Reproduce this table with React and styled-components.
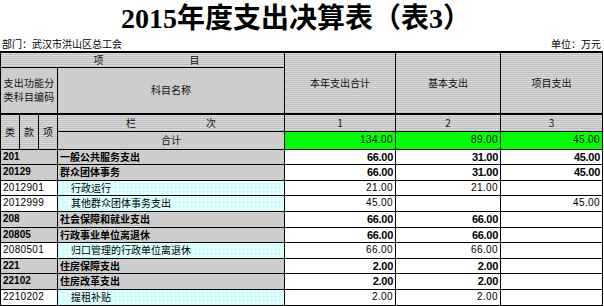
import React from "react";
import styled, { createGlobalStyle } from "styled-components";

const GlobalStyle = createGlobalStyle`
  html, body {
    margin: 0;
    padding: 0;
    background: #fff;
  }
  body {
    width: 604px;
    height: 306px;
    overflow: hidden;
    font-family: "Liberation Sans", "Noto Sans CJK SC", sans-serif;
    color: #000;
  }
`;

const grey = `
  background-color: #c0c0c0;
  background-image: conic-gradient(#f4f4f4 0 25%, transparent 0);
  background-size: 2px 2px;
`;

const cyan = `
  background-color: #ccffff;
  background-image: conic-gradient(#ffffff 0 25%, transparent 0);
  background-size: 4px 4px;
`;

const Page = styled.div`
  width: 604px;
`;

const Title = styled.h1`
  margin: 0;
  height: 38px;
  padding-right: 12px;
  font-family: "Liberation Serif", "Noto Sans CJK SC", serif;
  font-size: 28px;
  font-weight: bold;
  line-height: 38px;
  text-align: center;
`;

const InfoBar = styled.div`
  display: flex;
  justify-content: space-between;
  height: 13px;
  padding: 0 3px 0 2px;
  font-family: "Noto Sans CJK SC", sans-serif;
  font-size: 10px;
  line-height: 11px;
`;

const Table = styled.table`
  width: 602px;
  border-collapse: collapse;
  table-layout: fixed;
  border-top: 2px solid #000;
`;

const Row = styled.tr`
  height: ${p => p.h}px;
`;

const Cell = styled.td`
  border: 1px solid #000;
  padding: 0 2px;
  font-family: "Noto Sans CJK SC", sans-serif;
  font-size: 10px;
  line-height: 10px;
  white-space: nowrap;
  overflow: hidden;
  text-align: ${p => p.align || "left"};
  font-weight: ${p => (p.bold ? "bold" : "normal")};
  ${p => p.tone === "grey" && grey}
  ${p => p.tone === "cyan" && cyan}
  ${p => p.tone === "green" && "background: #00ff00;"}
  ${p => p.thickBottom && "border-bottom: 2px solid #000;"}
`;

const Head = styled(Cell)`
  text-align: center;
  color: #111;
`;

const Spread = styled.div`
  display: flex;
  justify-content: center;
  gap: ${p => p.gap}px;
  padding-left: ${p => p.shift || 0}px;
`;

const Lines = styled.div`
  display: flex;
  flex-direction: column;
  align-items: center;
  letter-spacing: 0.2px;
  line-height: 14px;
`;

const Code = styled(Cell)`
  font-family: "Liberation Sans", sans-serif;
  font-size: 10px;
  letter-spacing: ${p => (p.bold ? 0 : 0.3)}px;
  padding-left: 2px;
`;

const Name = styled(Cell)`
  padding-left: ${p => (p.bold ? 2 : 13)}px;
  font-size: 10px;
`;

const Num = styled(Cell)`
  font-family: "Liberation Sans", sans-serif;
  font-size: ${p => (p.bold ? 11 : 10)}px;
  letter-spacing: ${p => (p.bold ? -0.3 : 0.4)}px;
  text-align: right;
  padding-right: 2px;
  color: #000;
`;

const rows = [
  { code: "201", name: "一般公共服务支出", a: "66.00", b: "31.00", c: "45.00", top: true, h: 15 },
  { code: "20129", name: "群众团体事务", a: "66.00", b: "31.00", c: "45.00", top: true, h: 16 },
  { code: "2012901", name: "行政运行", a: "21.00", b: "21.00", c: "", h: 15 },
  { code: "2012999", name: "其他群众团体事务支出", a: "45.00", b: "", c: "45.00", h: 16 },
  { code: "208", name: "社会保障和就业支出", a: "66.00", b: "66.00", c: "", top: true, h: 16 },
  { code: "20805", name: "行政事业单位离退休", a: "66.00", b: "66.00", c: "", top: true, h: 15 },
  { code: "2080501", name: "归口管理的行政单位离退休", a: "66.00", b: "66.00", c: "", h: 16 },
  { code: "221", name: "住房保障支出", a: "2.00", b: "2.00", c: "", top: true, h: 15 },
  { code: "22102", name: "住房改革支出", a: "2.00", b: "2.00", c: "", top: true, h: 16 },
  { code: "2210202", name: "提租补贴", a: "2.00", b: "2.00", c: "", h: 16 }
];

const App = () => (
  <Page>
    <GlobalStyle />
    <Title>2015年度支出决算表（表3）</Title>
    <InfoBar>
      <span>部门：武汉市洪山区总工会</span>
      <span>单位：万元</span>
    </InfoBar>
    <Table>
      <colgroup>
        <col style={{ width: 19 }} />
        <col style={{ width: 19 }} />
        <col style={{ width: 19 }} />
        <col style={{ width: 227 }} />
        <col style={{ width: 111 }} />
        <col style={{ width: 105 }} />
        <col style={{ width: 102 }} />
      </colgroup>
      <tbody>
        <Row h={15}>
          <Head colSpan={4} tone="grey">
            <Spread gap={86} shift={8}>
              <span>项</span>
              <span>目</span>
            </Spread>
          </Head>
          <Head rowSpan={2} tone="grey" thickBottom>本年支出合计</Head>
          <Head rowSpan={2} tone="grey" thickBottom>基本支出</Head>
          <Head rowSpan={2} tone="grey" thickBottom>项目支出</Head>
        </Row>
        <Row h={47}>
          <Head colSpan={3} tone="grey" thickBottom>
            <Lines>
              <span>支出功能分</span>
              <span>类科目编码</span>
            </Lines>
          </Head>
          <Head tone="grey" thickBottom>科目名称</Head>
        </Row>
        <Row h={17}>
          <Head rowSpan={2} tone="grey">类</Head>
          <Head rowSpan={2} tone="grey">款</Head>
          <Head rowSpan={2} tone="grey">项</Head>
          <Head tone="grey">
            <Spread gap={70}>
              <span>栏</span>
              <span>次</span>
            </Spread>
          </Head>
          <Head tone="grey">1</Head>
          <Head tone="grey">2</Head>
          <Head tone="grey">3</Head>
        </Row>
        <Row h={18}>
          <Head tone="grey">合计</Head>
          <Num tone="green">134.00</Num>
          <Num tone="green">89.00</Num>
          <Num tone="green">45.00</Num>
        </Row>
        {rows.map(r => (
          <Row h={r.h} key={r.code}>
            <Code colSpan={3} bold={r.top} tone={r.top ? "grey" : undefined}>
              {r.code}
            </Code>
            <Name bold={r.top} tone={r.top ? "grey" : "cyan"}>
              {r.name}
            </Name>
            <Num bold={r.top}>{r.a}</Num>
            <Num bold={r.top}>{r.b}</Num>
            <Num bold={r.top}>{r.c}</Num>
          </Row>
        ))}
      </tbody>
    </Table>
  </Page>
);

export default App;
